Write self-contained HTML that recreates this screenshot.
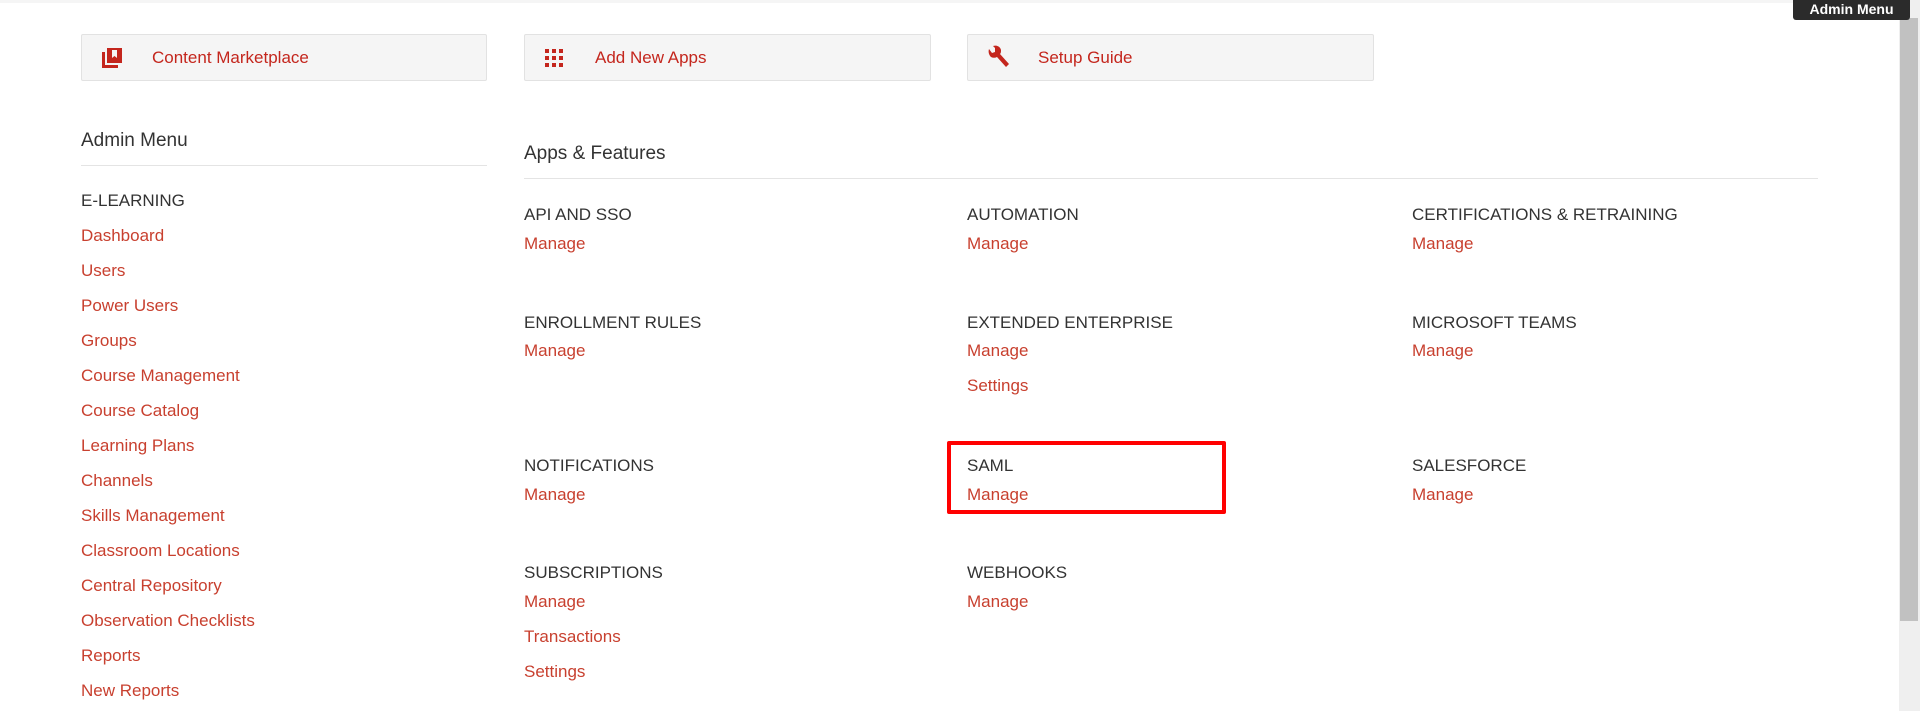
<!DOCTYPE html>
<html><head><meta charset="utf-8"><style>
*{margin:0;padding:0;box-sizing:border-box}
body{width:1920px;height:711px;overflow:hidden;background:#fff;font-family:"Liberation Sans",sans-serif;position:relative;color:#333}
.a{position:absolute;white-space:nowrap}
.btn{position:absolute;top:34px;height:47px;background:#f5f5f5;border:1px solid #e2e2e2;border-radius:2px}
.btn span{position:absolute;top:13px;font-size:17px;color:#c4261d}
.r{color:#c8402f;font-size:17px}
.t{color:#333;font-size:17px}
.hl{position:absolute;height:1px;background:#e4e4e4}
</style></head><body>
<div style="position:absolute;left:0;top:0;width:1900px;height:3px;background:#f5f5f5"></div>
<div class="btn" style="left:81px;width:406px">
<svg style="position:absolute;left:18px;top:11px" width="24" height="24" viewBox="0 0 24 24"><path d="M2 6v16h16v-3H5V6z" fill="#c4261d"/><path d="M7 2h15v15H7z" fill="#c4261d"/><path d="M12 4h5v8l-2.5-2-2.5 2z" fill="#f5f5f5"/></svg>
<span style="left:70px">Content Marketplace</span></div>
<div class="btn" style="left:524px;width:407px">
<svg style="position:absolute;left:20px;top:14px" width="18" height="18" viewBox="0 0 18 18" fill="#c4261d"><rect x="0" y="0" width="4" height="4"/><rect x="7" y="0" width="4" height="4"/><rect x="14" y="0" width="4" height="4"/><rect x="0" y="7" width="4" height="4"/><rect x="7" y="7" width="4" height="4"/><rect x="14" y="7" width="4" height="4"/><rect x="0" y="14" width="4" height="4"/><rect x="7" y="14" width="4" height="4"/><rect x="14" y="14" width="4" height="4"/></svg>
<span style="left:70px">Add New Apps</span></div>
<div class="btn" style="left:967px;width:407px">
<svg style="position:absolute;left:18px;top:10px" width="26" height="26" viewBox="0 0 26 26"><path d="M3 4l3 4 3-1 0-4-2-2c3-1 7 0 8 4 0 2 0 3-1 4l9 10-3 3-9-10c-2 1-4 1-6 0-2-2-3-5-2-8z" fill="#c4261d"/></svg>
<span style="left:70px">Setup Guide</span></div>

<div class="a t" style="left:81px;top:130px;font-size:19px">Admin Menu</div>
<div class="hl" style="left:81px;top:165px;width:406px"></div>
<div class="a t" style="left:524px;top:143px;font-size:19px">Apps &amp; Features</div>
<div class="hl" style="left:524px;top:178px;width:1294px"></div>

<div class="a t" style="left:81px;top:191px">E-LEARNING</div>
<div class="a r" style="left:81px;top:218px;line-height:35px">Dashboard<br>Users<br>Power Users<br>Groups<br>Course Management<br>Course Catalog<br>Learning Plans<br>Channels<br>Skills Management<br>Classroom Locations<br>Central Repository<br>Observation Checklists<br>Reports<br>New Reports</div>

<div class="a t" style="left:524px;top:205px">API AND SSO</div><div class="a r" style="left:524px;top:234px">Manage</div>
<div class="a t" style="left:967px;top:205px">AUTOMATION</div><div class="a r" style="left:967px;top:234px">Manage</div>
<div class="a t" style="left:1412px;top:205px">CERTIFICATIONS &amp; RETRAINING</div><div class="a r" style="left:1412px;top:234px">Manage</div>

<div class="a t" style="left:524px;top:313px">ENROLLMENT RULES</div><div class="a r" style="left:524px;top:341px">Manage</div>
<div class="a t" style="left:967px;top:313px">EXTENDED ENTERPRISE</div><div class="a r" style="left:967px;top:341px">Manage</div><div class="a r" style="left:967px;top:376px">Settings</div>
<div class="a t" style="left:1412px;top:313px">MICROSOFT TEAMS</div><div class="a r" style="left:1412px;top:341px">Manage</div>

<div class="a t" style="left:524px;top:456px">NOTIFICATIONS</div><div class="a r" style="left:524px;top:485px">Manage</div>
<div class="a t" style="left:967px;top:456px">SAML</div><div class="a r" style="left:967px;top:485px">Manage</div>
<div class="a t" style="left:1412px;top:456px">SALESFORCE</div><div class="a r" style="left:1412px;top:485px">Manage</div>
<div style="position:absolute;left:947px;top:441px;width:279px;height:73px;border:4px solid #f00;border-radius:2px"></div>

<div class="a t" style="left:524px;top:563px">SUBSCRIPTIONS</div><div class="a r" style="left:524px;top:584px;line-height:35px">Manage<br>Transactions<br>Settings</div>
<div class="a t" style="left:967px;top:563px">WEBHOOKS</div><div class="a r" style="left:967px;top:592px">Manage</div>

<div style="position:absolute;left:1899px;top:0;width:21px;height:711px;background:#efefef"></div>
<div style="position:absolute;left:1900px;top:18px;width:18px;height:603px;background:#c1c1c1"></div>
<div style="position:absolute;left:1793px;top:0;width:117px;height:20px;background:#2b2b2b;border-radius:0 0 3px 3px;color:#fff;font-weight:bold;font-size:14px;text-align:center;line-height:18px">Admin Menu</div>
</body></html>
